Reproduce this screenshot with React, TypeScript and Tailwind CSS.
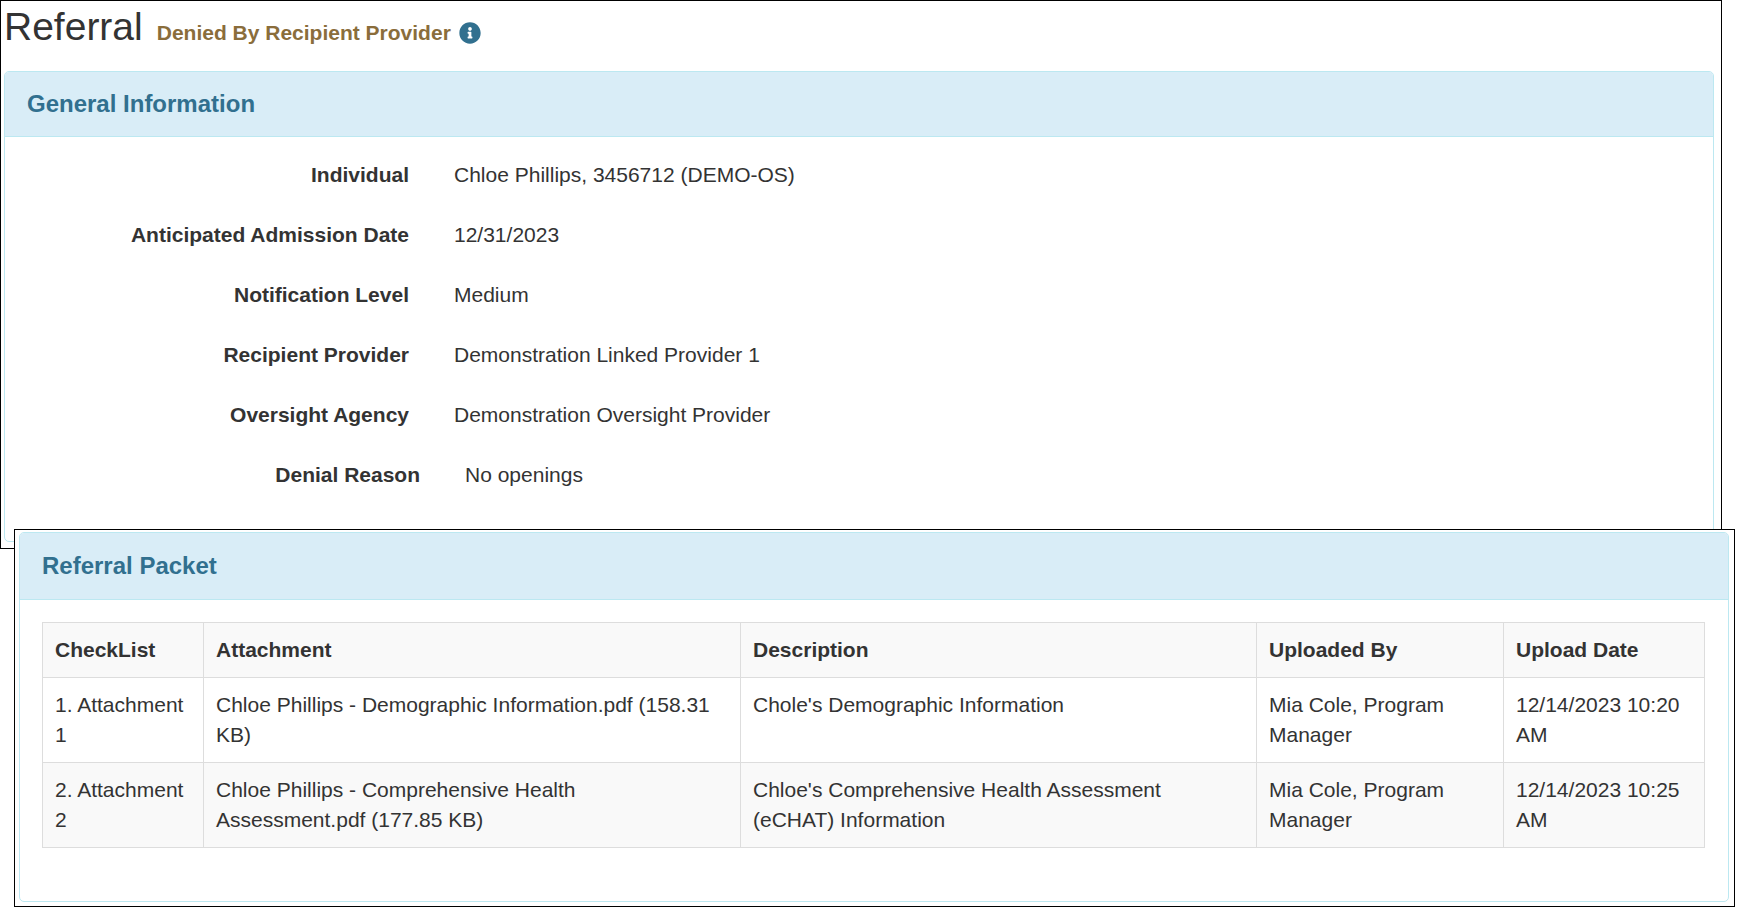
import { FaInfoCircle } from "react-icons/fa";

const info: [string, string][] = [
  ["Individual", "Chloe Phillips, 3456712 (DEMO-OS)"],
  ["Anticipated Admission Date", "12/31/2023"],
  ["Notification Level", "Medium"],
  ["Recipient Provider", "Demonstration Linked Provider 1"],
  ["Oversight Agency", "Demonstration Oversight Provider"],
];

const rows = [
  ["1. Attachment 1", "Chloe Phillips - Demographic Information.pdf (158.31 KB)", "Chole's Demographic Information", "Mia Cole, Program Manager", "12/14/2023 10:20 AM"],
  ["2. Attachment 2", "Chloe Phillips - Comprehensive Health Assessment.pdf (177.85 KB)", "Chloe's Comprehensive Health Assessment (eCHAT) Information", "Mia Cole, Program Manager", "12/14/2023 10:25 AM"],
];

const heads = ["CheckList", "Attachment", "Description", "Uploaded By", "Upload Date"];

export default function App() {
  return (
    <div className="w-[1741px] h-[909px] overflow-hidden bg-white text-[#333] text-[21px] leading-[30px] font-['Liberation_Sans',Arial,sans-serif]">
      <div className="w-[1722px] h-[549px] border border-black pl-[3px] overflow-hidden">
        <div className="h-[70px] flex items-baseline pt-[1px]">
          <h1 className="text-[39px] leading-[50px] font-normal">Referral</h1>
          <span className="ml-[14px] font-bold text-[#8a6d3b]">Denied By Recipient Provider</span>
          <FaInfoCircle className="ml-[8px] w-[22px] h-[22px] text-[#31708f] self-center mt-[-8px]" />
        </div>
        <section className="w-[1710px] h-[471px] border border-[#bce8f1] rounded-[5px] overflow-hidden">
          <div className="h-[65px] bg-[#d9edf7] border-b border-[#bce8f1] flex items-center pl-[22px] text-[24px] font-bold text-[#31708f]">
            General Information
          </div>
          <div className="pt-[8px]">
            {info.map(([k, v]) => (
              <div key={k} className="h-[60px] flex items-center">
                <div className="w-[404px] text-right font-bold">{k}</div>
                <div className="ml-[45px]">{v}</div>
              </div>
            ))}
            <div className="h-[60px] flex items-center ml-[11px]">
              <div className="w-[404px] text-right font-bold">Denial Reason</div>
              <div className="ml-[45px]">No openings</div>
            </div>
          </div>
        </section>
      </div>

      <div className="relative ml-[14px] mt-[-20px] w-[1721px] h-[378px] border border-black bg-white pl-[4px] pt-[2px]">
        <section className="w-[1710px] h-[370px] border border-[#bce8f1] rounded-[5px] overflow-hidden">
          <div className="h-[67px] bg-[#d9edf7] border-b border-[#bce8f1] flex items-center pl-[22px] text-[24px] font-bold text-[#31708f]">
            Referral Packet
          </div>
          <div className="pl-[22px] pt-[22px]">
            <table className="w-[1662px] table-fixed border-collapse">
              <colgroup>
                <col className="w-[161px]" />
                <col className="w-[537px]" />
                <col className="w-[516px]" />
                <col className="w-[247px]" />
                <col className="w-[201px]" />
              </colgroup>
              <thead>
                <tr className="bg-[#f9f9f9]">
                  {heads.map((h) => (
                    <th key={h} className="border border-[#ddd] px-[12px] py-[12px] text-left font-bold">{h}</th>
                  ))}
                </tr>
              </thead>
              <tbody>
                {rows.map((r, i) => (
                  <tr key={i} className={i === 1 ? "bg-[#f9f9f9]" : "bg-white"}>
                    {r.map((c, j) => (
                      <td key={j} className="border border-[#ddd] px-[12px] py-[12px] align-top">{c}</td>
                    ))}
                  </tr>
                ))}
              </tbody>
            </table>
          </div>
        </section>
      </div>
    </div>
  );
}
